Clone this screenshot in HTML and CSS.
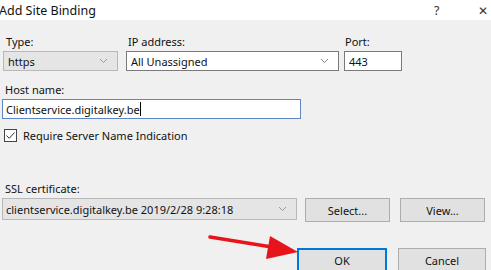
FILE: index.html
```html
<!DOCTYPE html>
<html lang="en">
<head>
  <meta charset="UTF-8">
  <title>Add Site Binding</title>
  <link rel="stylesheet" href="styles.css">
</head>
<body>
<div class="dialog">
  <div class="titlebar">
    <span class="title">Add Site Binding</span>
    <span class="help">?</span>
    <span class="close">&#x2715;</span>
  </div>
  <div class="content">
    <div class="row">
      <div class="field f-type">
        <label>Type:</label>
        <div class="combo grey"><span>https</span>
          <svg class="chev" width="9" height="6" viewBox="0 0 9 6"><path d="M1 1l3.5 3.5L8 1" fill="none" stroke="#999" stroke-width="1"/></svg>
        </div>
      </div>
      <div class="field f-ip">
        <label>IP address:</label>
        <div class="combo white"><span>All Unassigned</span>
          <svg class="chev" width="9" height="6" viewBox="0 0 9 6"><path d="M1 1l3.5 3.5L8 1" fill="none" stroke="#888" stroke-width="1"/></svg>
        </div>
      </div>
      <div class="field f-port">
        <label>Port:</label>
        <div class="box">443</div>
      </div>
    </div>

    <div class="field f-host">
      <label>Host name:</label>
      <div class="box focus">Clientservice.digitalkey.be<i class="caret"></i></div>
    </div>

    <div class="check">
      <svg class="cb" width="13" height="13" viewBox="0 0 13 13"><rect x="0.5" y="0.5" width="12" height="12" fill="#fff" stroke="#444"/><path d="M2.5 6.5l2.8 2.8L10.5 3.5" fill="none" stroke="#333" stroke-width="1"/></svg>
      <span>Require Server Name Indication</span>
    </div>

    <div class="field f-ssl">
      <label>SSL certificate:</label>
      <div class="row">
        <div class="combo grey ssl"><span>clientservice.digitalkey.be 2019/2/28 9:28:18</span>
          <svg class="chev" width="9" height="6" viewBox="0 0 9 6"><path d="M1 1l3.5 3.5L8 1" fill="none" stroke="#999" stroke-width="1"/></svg>
        </div>
        <button class="btn b-select">Select...</button>
        <button class="btn b-view">View...</button>
      </div>
    </div>

    <div class="actions">
      <button class="btn ok">OK</button>
      <button class="btn cancel">Cancel</button>
    </div>
  </div>

  <svg class="arrow" width="100" height="40" viewBox="0 0 100 40">
    <path d="M2 4 L70 15" stroke="#e8141b" stroke-width="3.5" stroke-linecap="round" fill="none"/>
    <path d="M62 3 L90 19 L58 26 Z" fill="#e8141b"/>
  </svg>
</div>
</body>
</html>
```

FILE: styles.css
```css
* {
  margin: 0;
  padding: 0;
  box-sizing: border-box;
}

body {
  width: 491px;
  height: 270px;
  overflow: hidden;
  background: #f0f0f0;
  font-family: "Noto Sans", "Liberation Sans", sans-serif;
  font-size: 11px;
  color: #111;
}

.dialog {
  position: relative;
  width: 491px;
  height: 270px;
}

.titlebar {
  height: 20px;
  background: #fff;
  display: flex;
  align-items: center;
  font-size: 12.5px;
}

.title {
  flex: 1;
  margin-left: -1px;
  color: #111;
}

.help {
  width: 44px;
  color: #333;
}

.close {
  width: 11px;
  margin-right: 2px;
  font-size: 12px;
  color: #333;
}

.content {
  padding: 15px 0 0 2px;
}

.row {
  display: flex;
  align-items: flex-start;
}

label {
  display: block;
  height: 14px;
  line-height: 14px;
  margin-bottom: 2px;
  padding-left: 3px;
}

.f-type { width: 115px; margin-left: 1px; }
.f-ip { width: 213px; margin-left: 8px; }
.f-ip label { padding-left: 2px; }
.f-port { width: 58px; margin-left: 5px; }
.f-port label { padding-left: 1px; }

.combo, .box {
  height: 20px;
  border: 1px solid #adadad;
  display: flex;
  align-items: center;
  padding-left: 4px;
}

.combo span { flex: 1; white-space: nowrap; }

.combo.grey {
  background: #e5e5e5;
  border-color: #b8b8b8;
}

.combo.white, .box {
  background: #fff;
  border-color: #7a7a7a;
}

.chev { margin-right: 9px; }

.f-host {
  margin-top: 12px;
  width: 299px;
}

.box.focus {
  border-color: #5f86c4;
  padding-left: 3px;
}

.caret {
  display: inline-block;
  width: 1px;
  height: 14px;
  background: #000;
}

.check {
  margin-top: 9px;
  height: 14px;
  display: flex;
  align-items: center;
  padding-left: 2px;
}

.cb { margin-right: 6px; }

.f-ssl {
  margin-top: 40px;
}

.combo.ssl {
  width: 295px;
  height: 22px;
  padding-left: 3px;
}

.btn {
  height: 24px;
  background: #e1e1e1;
  border: 1px solid #adadad;
  font: inherit;
  color: #111;
}

.b-select { width: 85px; margin-left: 8px; }
.b-view { width: 85px; margin-left: 10px; }

.actions {
  margin-top: 26px;
  display: flex;
  padding-left: 295px;
}

.ok {
  width: 90px;
  border: 2px solid #0078d7;
}

.cancel {
  width: 88px;
  margin-left: 11px;
}

.arrow {
  position: absolute;
  left: 208px;
  top: 233px;
}
```
